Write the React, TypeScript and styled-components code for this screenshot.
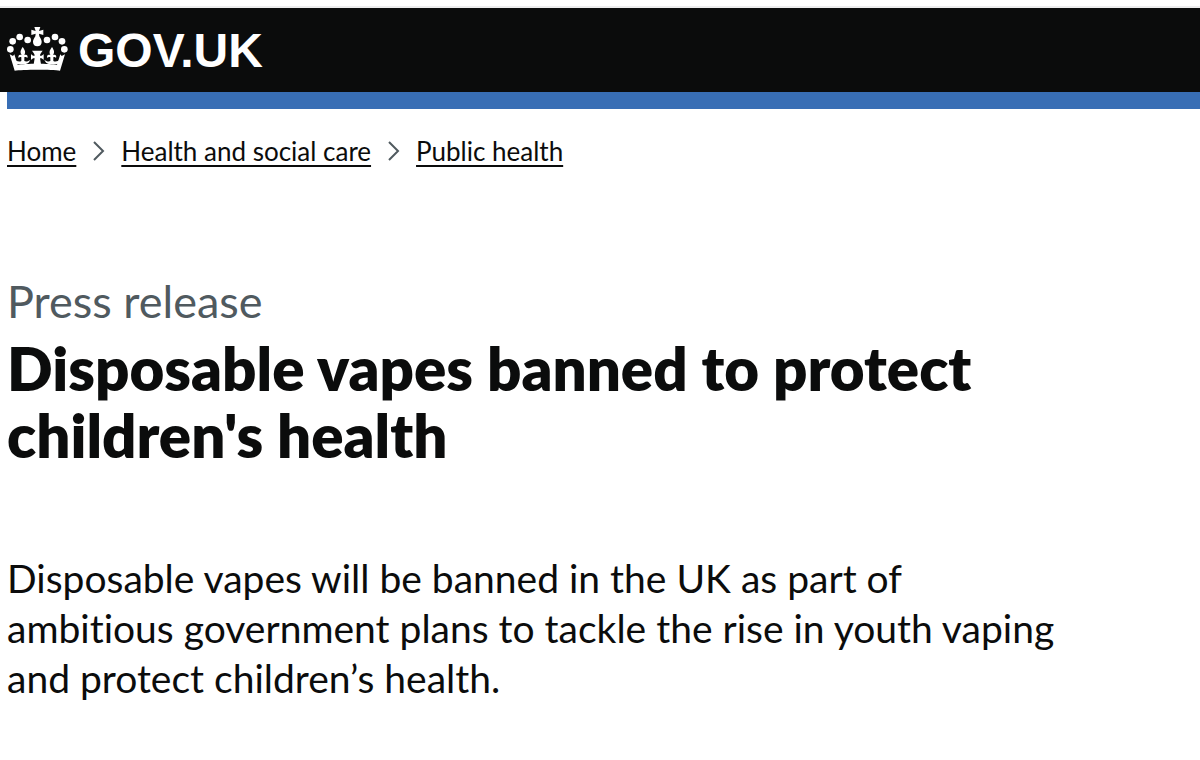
import React from "react";
import styled, { createGlobalStyle } from "styled-components";

const GlobalStyle = createGlobalStyle`
  *, *::before, *::after { box-sizing: border-box; }
  body {
    margin: 0;
    background: #ffffff;
    color: #0b0c0c;
    font-family: Lato, "Noto Sans", sans-serif;
    font-variant-ligatures: none;
  }
`;

const Header = styled.header`
  margin-top: 6px;
  border-top: 2px solid #ededee;
  background: #0b0c0c;
`;

const HeaderInner = styled.div`
  display: flex;
  align-items: center;
  height: 84px;
  padding-left: 7px;
`;

const HomeLink = styled.a`
  display: flex;
  align-items: center;
  gap: 10px;
  color: #ffffff;
  text-decoration: none;
`;

const Crown = styled.svg`
  display: block;
  width: 61px;
  height: 46px;
  fill: currentColor;
`;

const Wordmark = styled.span`
  padding-top: 2px;
  font-family: "Liberation Sans", Arial, sans-serif;
  font-size: 48px;
  line-height: 56px;
  font-weight: 700;
`;

const AccentBar = styled.div`
  height: 17px;
  margin-left: 7px;
  background: #386eb5;
`;

const Container = styled.div`
  padding: 0 7px;
`;

const Breadcrumbs = styled.ol`
  display: flex;
  align-items: center;
  gap: 17px;
  margin: 0;
  padding: 26px 0 0;
  list-style: none;
  font-size: 26px;
  line-height: 32px;
`;

const Crumb = styled.li`
  display: flex;
  align-items: center;
  gap: 16px;
`;

const CrumbLink = styled.a`
  color: inherit;
  text-decoration: underline;
  text-decoration-thickness: 2px;
  text-underline-offset: 4px;
  text-decoration-skip-ink: none;
`;

const Chevron = styled.svg`
  width: 12px;
  height: 20px;
  fill: none;
  stroke: #505a5f;
  stroke-width: 2;
`;

const Caption = styled.p`
  margin: 102px 0 0;
  color: #505a5f;
  font-size: 45px;
  line-height: 64px;
`;

const Title = styled.h1`
  max-width: 1060px;
  margin: 2px 0 0;
  font-size: 60px;
  line-height: 67px;
  font-weight: 800;
`;

const Lead = styled.p`
  max-width: 1070px;
  margin: 84px 0 0;
  font-size: 39px;
  line-height: 50px;
`;

const crumbs = ["Home", "Health and social care", "Public health"];

const beads = [
  [30, 94], [37, 70], [58, 57], [82, 66],
  [140, 66], [164, 57], [185, 70], [192, 94],
];

function CrownIcon() {
  return (
    <Crown viewBox="20 27 183 138" aria-hidden="true">
      {beads.map(([cx, cy]) => (
        <circle key={cx} cx={cx} cy={cy} r="10" />
      ))}
      {/* Top cross and orb */}
      <path d="M102 27h18l-4 12 13-4v16l-13-4 1 8c5 8 7 12 7 17 0 8-5 13-13 13s-13-5-13-13c0-5 2-9 7-17l1-8-13 4V35l13 4z" />
      {/* Rim */}
      <path d="M43 158L28 109l10 5 4-5 10 31c20-4 98-4 118 0l10-31 4 5 10-5-15 49c-22-4-114-4-136 0z" />
      {/* Centre cross */}
      <path d="M95 98h32c-5 6-8 10-8 15 4 1 8-1 11-5v18c-3-4-7-6-11-5l3 18h-22l3-18c-4-1-8 1-11 5v-18c3 4 7 6 11 5 0-5-3-9-8-15z" />
      {/* Fleurs-de-lis */}
      <path d="M67 87c7 9 10 16 5 24 7-3 12 1 9 9-2-3-6-4-9-2v11c5 3 12 1 18-4-2 7-8 12-14 13H50c-4-3-6-8-7-14 5 6 14 9 20 5v-11c-3-2-6-1-8 2-3-8 2-12 9-9-6-8-3-15 3-24z" />
      <path d="M155 87c6 9 9 16 3 24 7-3 12 1 9 9-2-3-5-4-8-2v11c6 4 15 1 20-5-1 6-3 11-7 14h-26c-6-1-12-6-14-13 6 5 13 7 18 4v-11c-3-2-7-1-9 2-3-8 2-12 9-9-5-8-2-15 5-24z" />
    </Crown>
  );
}

export default function App() {
  return (
    <>
      <GlobalStyle />
      <Header>
        <HeaderInner>
          <HomeLink href="#" aria-label="GOV.UK">
            <CrownIcon />
            <Wordmark>GOV.UK</Wordmark>
          </HomeLink>
        </HeaderInner>
      </Header>
      <AccentBar />
      <Container>
        <nav aria-label="Breadcrumb">
          <Breadcrumbs>
            {crumbs.map((label, index) => (
              <Crumb key={label}>
                {index > 0 && (
                  <Chevron viewBox="0 0 12 20" aria-hidden="true">
                    <path d="M1 1l9 9-9 9" />
                  </Chevron>
                )}
                <CrumbLink href="#">{label}</CrumbLink>
              </Crumb>
            ))}
          </Breadcrumbs>
        </nav>
        <main>
          <Caption>Press release</Caption>
          <Title>Disposable vapes banned to protect children's health</Title>
          <Lead>
            Disposable vapes will be banned in the UK as part of ambitious
            government plans to tackle the rise in youth vaping and protect
            children’s health.
          </Lead>
        </main>
      </Container>
    </>
  );
}
